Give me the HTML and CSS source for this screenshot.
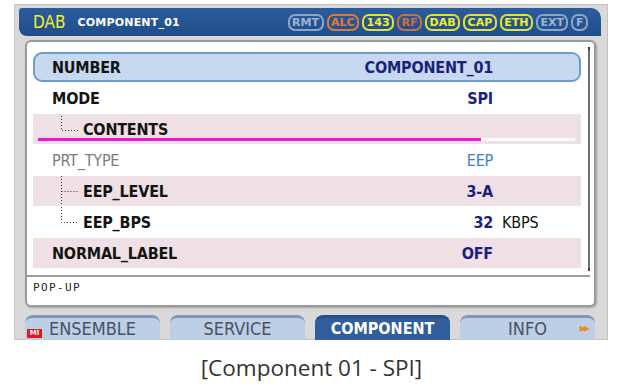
FILE: index.html
```html
<!DOCTYPE html>
<html lang="en">
<head>
    <meta charset="UTF-8">
    <title>Component 01 - SPI</title>
    <link rel="stylesheet" href="styles.css">
</head>
<body>
    <div class="device">
        <div class="title-bar">
            <span class="mode">DAB</span>
            <span class="title">COMPONENT_01</span>
            <div class="badges">
                <span class="badge off">RMT</span>
                <span class="badge warn">ALC</span>
                <span class="badge on">143</span>
                <span class="badge warn dim">RF</span>
                <span class="badge on">DAB</span>
                <span class="badge on">CAP</span>
                <span class="badge on">ETH</span>
                <span class="badge off">EXT</span>
                <span class="badge off">F</span>
            </div>
        </div>

        <div class="panel">
            <div class="list-wrap">
                <div class="list">
                    <div class="row selected">
                        <span class="label">NUMBER</span>
                        <span class="value">COMPONENT_01</span>
                        <span class="unit"></span>
                    </div>
                    <div class="row">
                        <span class="label">MODE</span>
                        <span class="value">SPI</span>
                        <span class="unit"></span>
                    </div>
                    <div class="row shaded has-progress">
                        <svg class="branch" width="20" height="30" viewBox="0 0 20 30"><path d="M1.5 2V16.5H19" /></svg>
                        <span class="label">CONTENTS</span>
                        <div class="progress"><div class="progress-fill" style="width: 82.5%"></div></div>
                    </div>
                    <div class="row">
                        <span class="label muted">PRT_TYPE</span>
                        <span class="value light">EEP</span>
                        <span class="unit"></span>
                    </div>
                    <div class="row shaded">
                        <svg class="branch" width="20" height="30" viewBox="0 0 20 30"><path d="M1.5 0V31M1.5 15.5H19" /></svg>
                        <span class="label">EEP_LEVEL</span>
                        <span class="value">3-A</span>
                        <span class="unit"></span>
                    </div>
                    <div class="row">
                        <svg class="branch" width="20" height="30" viewBox="0 0 20 30"><path d="M1.5 0V15.5H19" /></svg>
                        <span class="label">EEP_BPS</span>
                        <span class="value">32</span>
                        <span class="unit">KBPS</span>
                    </div>
                    <div class="row shaded">
                        <span class="label">NORMAL_LABEL</span>
                        <span class="value">OFF</span>
                        <span class="unit"></span>
                    </div>
                </div>
                <div class="scrollbar"></div>
            </div>
            <div class="popup">POP-UP</div>
        </div>

        <div class="tabs">
            <div class="tab"><span class="mi">MI</span>ENSEMBLE</div>
            <div class="tab">SERVICE</div>
            <div class="tab active">COMPONENT</div>
            <div class="tab">INFO<span class="more">&#9654;&#9654;</span></div>
        </div>
    </div>

    <div class="caption">[Component 01 - SPI]</div>
</body>
</html>
```

FILE: styles.css
```css
body {
    margin: 0;
    background: #fff;
    font-family: "DejaVu Sans Condensed", "Liberation Sans", sans-serif;
}

.device {
    width: 594px;
    height: 336px;
    margin: 4px 0 0 14px;
    background: #d9d9d9;
    border: 1px solid #c4c4c4;
    box-sizing: border-box;
    padding-top: 3px;
}

/* title bar */
.title-bar {
    height: 28px;
    margin: 0 6px 0 4px;
    background: linear-gradient(#2b5c9b, #1f4e8b);
    border-radius: 3px 10px 0 8px;
    display: flex;
    align-items: center;
    padding-left: 14px;
}

.mode {
    color: #f4ee2c;
    font-size: 17px;
    margin-right: 12px;
}

.title {
    color: #fff;
    font-family: "DejaVu Sans", sans-serif;
    font-weight: bold;
    font-size: 11px;
    letter-spacing: 0.2px;
}

.badges {
    margin-left: auto;
    margin-right: 13px;
    display: flex;
    gap: 3px;
}

.badge {
    height: 17px;
    box-sizing: border-box;
    border: 2px solid;
    border-radius: 7px;
    padding: 0 2.5px;
    font-family: "DejaVu Sans", sans-serif;
    font-weight: bold;
    font-size: 11px;
    line-height: 13px;
    min-width: 15px;
    text-align: center;
}

.badge.off {
    color: #9fb4cf;
    border-color: #8ea6c6;
}

.badge.warn {
    color: #e8792e;
    border-color: #e07a34;
}

.badge.warn.dim {
    color: #d86c38;
    border-color: #c8703e;
}

.badge.on {
    color: #f2ec2a;
    border-color: #e8e030;
}

/* main panel */
.panel {
    height: 267px;
    margin: 4px 11px 0 10px;
    background: #fff;
    border: 2px solid #9a9a9a;
    border-radius: 6px;
    box-sizing: border-box;
    box-shadow: 1px 1px 2px rgba(0, 0, 0, 0.25);
}

.list-wrap {
    display: flex;
    align-items: flex-start;
    padding: 10px 0 4px 6px;
    border-bottom: 2px solid #9c9c9c;
    margin-right: 4px;
}

.list {
    width: 551px;
    display: flex;
    flex-direction: column;
    gap: 1px;
}

.scrollbar {
    width: 2px;
    height: 218px;
    margin: -5px 0 0 7px;
    background: #6b7078;
    border-top: 3px solid #3c4048;
    border-bottom: 3px solid #3c4048;
}

.row {
    height: 30px;
    display: flex;
    align-items: center;
    font-size: 16px;
    font-weight: bold;
    letter-spacing: -0.2px;
    color: #141414;
    box-sizing: border-box;
    padding-left: 19px;
}

.row.selected {
    background: #c6d9f0;
    border: 2px solid #6f9bcb;
    border-radius: 9px;
    padding-left: 17px;
}

.row.shaded {
    background: #eee0e4;
}

.has-progress {
    position: relative;
}

.branch {
    margin-left: 8px;
    margin-right: 3px;
    flex: none;
}

.branch path {
    fill: none;
    stroke: #333;
    stroke-width: 1;
    stroke-dasharray: 1 2;
}

.label {
    flex: 1;
}

.label.muted {
    color: #7a7a7a;
    font-weight: normal;
}

.value {
    width: 150px;
    text-align: right;
    color: #1c1f7c;
}

.value.light {
    color: #3d7ec4;
    font-weight: normal;
}

.unit {
    width: 79px;
    padding-left: 9px;
    color: #141414;
    font-weight: normal;
}

.row.selected .unit {
    width: 77px;
}

.progress {
    position: absolute;
    left: 5px;
    right: 6px;
    bottom: 3px;
    height: 3px;
    background: #fdfdfd;
}

.progress-fill {
    height: 100%;
    background: #f214d6;
}

.popup {
    padding: 4px 0 0 6px;
    font-family: "DejaVu Sans Mono", monospace;
    font-size: 11px;
    letter-spacing: 1.4px;
    color: #222;
}

/* tabs */
.tabs {
    display: flex;
    gap: 10px;
    margin: 8px 0 0 10px;
}

.tab {
    position: relative;
    width: 135px;
    height: 25px;
    box-sizing: border-box;
    background: #bccfe6;
    border-top: 3px solid #7f96b6;
    border-radius: 8px 8px 0 0;
    text-align: center;
    font-size: 18px;
    line-height: 22px;
    color: #4b5160;
}

.tab.active {
    background: #2f5e9b;
    border-top-color: #244f87;
    color: #fff;
    font-weight: bold;
    font-size: 16px;
}

.mi {
    position: absolute;
    left: 2px;
    bottom: 2px;
    width: 15px;
    height: 9px;
    background: #e01818;
    color: #fff;
    font-family: "DejaVu Sans", sans-serif;
    font-size: 7px;
    font-weight: bold;
    line-height: 9px;
    text-align: center;
}

.more {
    position: absolute;
    right: 7px;
    top: 5px;
    color: #f08a1e;
    font-family: "DejaVu Sans", sans-serif;
    font-size: 8px;
    line-height: 12px;
    letter-spacing: -2px;
}

.caption {
    text-align: center;
    margin-top: 12px;
    font-family: "Open Sans", "Noto Sans", sans-serif;
    font-size: 22.5px;
    color: #333;
}
```
